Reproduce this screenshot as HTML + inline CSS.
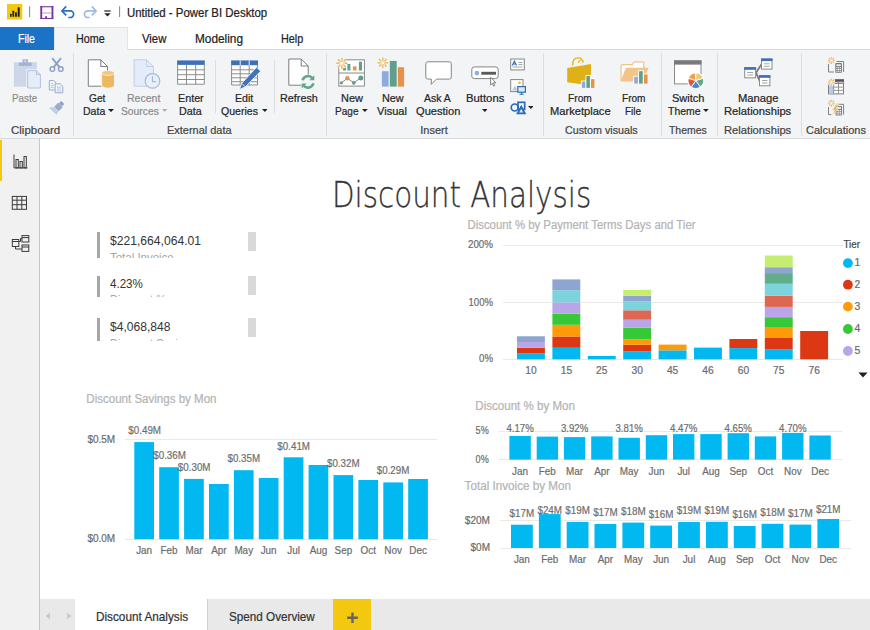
<!DOCTYPE html>
<html lang="en">
<head>
<meta charset="utf-8">
<title>Untitled - Power BI Desktop</title>
<style>
html,body{margin:0;padding:0;background:#fff}
body{width:870px;height:630px;overflow:hidden;position:relative;font-family:"Liberation Sans",sans-serif;font-size:12px;color:#333}
div,span,svg{position:absolute;box-sizing:border-box}
.t{white-space:nowrap;transform-origin:0 0;display:block}
#ribbon .t,#tabs .t,#titlebar .t,#pages .t{-webkit-text-stroke:.22px currentColor}
.title{-webkit-text-stroke:.3px #333;font-family:"DejaVu Sans Light","DejaVu Sans","Liberation Sans",sans-serif;font-weight:200}
svg text{font-family:"Liberation Sans",sans-serif}
#titlebar{left:0;top:0;width:870px;height:27px;background:#fff}
#tabs{left:0;top:27px;width:870px;height:23px;background:#fff}
#ribbon{left:0;top:50px;width:870px;height:89px;background:#f3f4f6;border-bottom:1px solid #d9dadb}
#nav{left:0;top:139px;width:40px;height:491px;background:#f1f1f1;border-right:1px solid #c9c6c6}
#canvas{left:40px;top:139px;width:830px;height:460px;background:#fff}
#pages{left:40px;top:599px;width:830px;height:31px;background:#e9e9e9}
.sep{width:1px;background:#dcdddf}
</style>
</head>
<body>

<div id="titlebar">
<svg width="125" height="27" viewBox="0 0 125 27" style="left:0;top:0">
<rect x="7" y="4" width="15.3" height="15.5" fill="#f2c811"/>
<rect x="10" y="13.8" width="1.6" height="3" rx=".5" fill="#222"/><rect x="12.4" y="10.8" width="1.8" height="6" rx=".5" fill="#222"/><rect x="15" y="12.3" width="1.9" height="4.5" rx=".5" fill="#222"/><rect x="17.7" y="7.3" width="2" height="9.5" rx=".5" fill="#222"/>
<rect x="29.200" y="6.200" width=".9" height="10.800" fill="#777"/>
<g fill="#7535a3"><rect x="40.300" y="6.200" width="1.900" height="12.800"/><rect x="51.500" y="6.200" width="1.900" height="12.800"/><rect x="40.300" y="6.200" width="13.100" height="1.100"/><rect x="40.300" y="18" width="13.100" height="1"/><rect x="45.200" y="16.200" width="1.800" height="2"/><rect x="42.200" y="12.500" width="9.300" height="1" fill="#b898d2"/></g>
<path d="M62.500 10.900h7.600a3.500 3.300 0 0 1 0 6.600h-1.800" fill="none" stroke="#2a6fc2" stroke-width="1.700"/><path d="M66.200 6.400l-4.300 4.500 4.300 4.500" fill="none" stroke="#2a6fc2" stroke-width="1.700"/>
<path d="M95.500 10.900h-7.600a3.500 3.300 0 0 0 0 6.600h1.800" fill="none" stroke="#a3bbdd" stroke-width="1.700"/><path d="M91.800 6.400l4.300 4.500-4.300 4.500" fill="none" stroke="#a3bbdd" stroke-width="1.700"/>
<rect x="104.3" y="10.4" width="6.4" height="1.2" fill="#222"/><path d="M104.3 13.2h6.4l-3.2 3.4z" fill="#222"/>
<rect x="119.200" y="6.200" width=".9" height="10.800" fill="#777"/>
</svg>
<span class="t" style="left:126.90px;top:5.5px;font-size:12px;line-height:15px;color:#222;transform:scaleX(0.9512)">Untitled - Power BI Desktop</span>
</div>
<div id="tabs">
<div style="left:0;top:22px;width:870px;height:1px;background:#dadbdc"></div>
<div style="left:0;top:0;width:53.5px;height:23px;background:#1a73c7"></div>
<div style="left:53.5px;top:0;width:74.5px;height:23px;background:#f3f4f6;border:1px solid #e3e4e6;border-bottom:none"></div>
<span class="t" style="left:18.00px;top:4.5px;font-size:12px;line-height:15px;color:#fff;transform:scaleX(0.8786)">File</span>
<span class="t" style="left:76.30px;top:4.5px;font-size:12px;line-height:15px;color:#222;transform:scaleX(0.8966)">Home</span>
<span class="t" style="left:142.30px;top:4.5px;font-size:12px;line-height:15px;color:#222;transform:scaleX(0.9446)">View</span>
<span class="t" style="left:195.40px;top:4.5px;font-size:12px;line-height:15px;color:#222;transform:scaleX(0.9858)">Modeling</span>
<span class="t" style="left:280.90px;top:4.5px;font-size:12px;line-height:15px;color:#222;transform:scaleX(0.9032)">Help</span>
</div>
<div id="ribbon">
<div class="sep" style="left:73.0px;top:3px;height:83px"></div>
<div class="sep" style="left:325.8px;top:3px;height:83px"></div>
<div class="sep" style="left:542.8px;top:3px;height:83px"></div>
<div class="sep" style="left:660.8px;top:3px;height:83px"></div>
<div class="sep" style="left:716.9px;top:3px;height:83px"></div>
<div class="sep" style="left:801.1px;top:3px;height:83px"></div>
<div class="sep" style="left:214.8px;top:10px;height:53px"></div>
<div class="sep" style="left:273.8px;top:10px;height:53px"></div>
<span class="t" style="left:12.40px;top:41.0px;font-size:11px;line-height:14px;color:#8c8c8c;transform:scaleX(0.8958)">Paste</span>
<span class="t" style="left:11.10px;top:73.0px;font-size:11px;line-height:14px;color:#444;transform:scaleX(1.0450)">Clipboard</span>
<span class="t" style="left:89.20px;top:41.0px;font-size:11px;line-height:14px;color:#262626;transform:scaleX(0.9246)">Get</span>
<span class="t" style="left:82.50px;top:54.0px;font-size:11px;line-height:14px;color:#262626;transform:scaleX(0.9597)">Data</span>
<svg width="8" height="5" viewBox="0 0 8 5" style="left:107.5px;top:59.1px;width:6.0px;height:3.1px" preserveAspectRatio="none"><path d="M0 0h8L4 5z" fill="#222"/></svg>
<span class="t" style="left:127.10px;top:41.0px;font-size:11px;line-height:14px;color:#8c8c8c;transform:scaleX(0.9586)">Recent</span>
<span class="t" style="left:121.40px;top:54.0px;font-size:11px;line-height:14px;color:#8c8c8c;transform:scaleX(0.9370)">Sources</span>
<svg width="8" height="5" viewBox="0 0 8 5" style="left:162.2px;top:59.2px;width:5.4px;height:2.8px" preserveAspectRatio="none"><path d="M0 0h8L4 5z" fill="#aaa"/></svg>
<span class="t" style="left:178.00px;top:41.0px;font-size:11px;line-height:14px;color:#262626;transform:scaleX(0.9776)">Enter</span>
<span class="t" style="left:178.70px;top:54.0px;font-size:11px;line-height:14px;color:#262626;transform:scaleX(0.9726)">Data</span>
<span class="t" style="left:166.80px;top:73.0px;font-size:11px;line-height:14px;color:#444;transform:scaleX(0.9962)">External data</span>
<span class="t" style="left:234.60px;top:41.0px;font-size:11px;line-height:14px;color:#262626;transform:scaleX(0.9658)">Edit</span>
<span class="t" style="left:221.10px;top:54.0px;font-size:11px;line-height:14px;color:#262626;transform:scaleX(0.9604)">Queries</span>
<svg width="8" height="5" viewBox="0 0 8 5" style="left:261.5px;top:59.1px;width:5.8px;height:3.0px" preserveAspectRatio="none"><path d="M0 0h8L4 5z" fill="#222"/></svg>
<span class="t" style="left:279.80px;top:41.0px;font-size:11px;line-height:14px;color:#262626;transform:scaleX(0.9811)">Refresh</span>
<span class="t" style="left:340.60px;top:41.0px;font-size:11px;line-height:14px;color:#262626;transform:scaleX(0.9942)">New</span>
<span class="t" style="left:335.40px;top:54.0px;font-size:11px;line-height:14px;color:#262626;transform:scaleX(0.9149)">Page</span>
<svg width="8" height="5" viewBox="0 0 8 5" style="left:362.0px;top:59.1px;width:5.8px;height:3.0px" preserveAspectRatio="none"><path d="M0 0h8L4 5z" fill="#222"/></svg>
<span class="t" style="left:381.60px;top:41.0px;font-size:11px;line-height:14px;color:#262626;transform:scaleX(0.9851)">New</span>
<span class="t" style="left:377.10px;top:54.0px;font-size:11px;line-height:14px;color:#262626;transform:scaleX(1.0049)">Visual</span>
<span class="t" style="left:424.00px;top:41.0px;font-size:11px;line-height:14px;color:#262626;transform:scaleX(0.9491)">Ask A</span>
<span class="t" style="left:415.80px;top:54.0px;font-size:11px;line-height:14px;color:#262626;transform:scaleX(1.0085)">Question</span>
<span class="t" style="left:466.10px;top:41.0px;font-size:11px;line-height:14px;color:#262626;transform:scaleX(1.0271)">Buttons</span>
<svg width="8" height="5" viewBox="0 0 8 5" style="left:481.5px;top:59.1px;width:5.7px;height:2.9px" preserveAspectRatio="none"><path d="M0 0h8L4 5z" fill="#222"/></svg>
<svg width="8" height="5" viewBox="0 0 8 5" style="left:527.7px;top:56.1px;width:5.8px;height:3.0px" preserveAspectRatio="none"><path d="M0 0h8L4 5z" fill="#222"/></svg>
<span class="t" style="left:420.30px;top:73.0px;font-size:11px;line-height:14px;color:#444;transform:scaleX(1.0000)">Insert</span>
<span class="t" style="left:567.90px;top:41.0px;font-size:11px;line-height:14px;color:#262626;transform:scaleX(0.9276)">From</span>
<span class="t" style="left:549.80px;top:54.0px;font-size:11px;line-height:14px;color:#262626;transform:scaleX(1.0113)">Marketplace</span>
<span class="t" style="left:621.50px;top:41.0px;font-size:11px;line-height:14px;color:#262626;transform:scaleX(0.9159)">From</span>
<span class="t" style="left:625.00px;top:54.0px;font-size:11px;line-height:14px;color:#262626;transform:scaleX(0.9020)">File</span>
<span class="t" style="left:564.70px;top:73.0px;font-size:11px;line-height:14px;color:#444;transform:scaleX(0.9748)">Custom visuals</span>
<span class="t" style="left:671.70px;top:41.0px;font-size:11px;line-height:14px;color:#262626;transform:scaleX(1.0032)">Switch</span>
<span class="t" style="left:667.70px;top:54.0px;font-size:11px;line-height:14px;color:#262626;transform:scaleX(0.9493)">Theme</span>
<svg width="8" height="5" viewBox="0 0 8 5" style="left:702.9px;top:59.1px;width:5.8px;height:3.0px" preserveAspectRatio="none"><path d="M0 0h8L4 5z" fill="#222"/></svg>
<span class="t" style="left:669.30px;top:73.0px;font-size:11px;line-height:14px;color:#444;transform:scaleX(0.9487)">Themes</span>
<span class="t" style="left:737.50px;top:41.0px;font-size:11px;line-height:14px;color:#262626;transform:scaleX(1.0185)">Manage</span>
<span class="t" style="left:724.40px;top:54.0px;font-size:11px;line-height:14px;color:#262626;transform:scaleX(1.0178)">Relationships</span>
<span class="t" style="left:724.40px;top:73.0px;font-size:11px;line-height:14px;color:#444;transform:scaleX(1.0178)">Relationships</span>
<span class="t" style="left:806.30px;top:73.0px;font-size:11px;line-height:14px;color:#444;transform:scaleX(0.9996)">Calculations</span>
<svg width="870" height="89" viewBox="0 50 870 89" style="left:0;top:0">
<g id="ico-paste">
<rect x="13.9" y="62.2" width="23" height="24.5" fill="#cdd7e9"/>
<rect x="18.8" y="62.6" width="12.9" height="3.3" fill="#a3b3d0"/>
<path d="M22.6 62.8v-3.5h5.4v3.5z" fill="#a3b3d0"/><rect x="24.4" y="60.5" width="1.8" height="1.5" fill="#dfe6f2"/>
<path d="M26.3 69.2h10.3l5.2 5.2v15H26.3z" fill="#f3f4f6"/>
<path d="M27.7 70.6h8.7l4 4v13.4H27.7z" fill="#e6edf8" stroke="#b3c2df" stroke-width="1"/>
<path d="M36.4 70.6v4h4" fill="none" stroke="#b3c2df" stroke-width="1"/>
</g>
<g id="ico-cut" fill="none" stroke="#8fa1c8" stroke-width="1.500">
<circle cx="52.400" cy="69.100" r="2.300"/><circle cx="60.800" cy="69.100" r="2.300"/>
<path d="M52.200 58.200l7.400 9.200M61 58.200l-7.400 9.200" stroke-width="2"/>
</g>
<g id="ico-copy" fill="#eef2fa" stroke="#9dadcf" stroke-width="1">
<path d="M49.300 80.500h4.400l2.200 2.200v7.300h-6.600z"/>
<path d="M55.100 83.800h5.100l2.600 2.600v6.400h-7.700z"/>
<path d="M51 83.500h2M51 85.500h2.800M51 87.500h2.800M57 87.200h4M57 89.100h4M57 91h4" stroke-width=".7" stroke="#aab8d6"/>
</g>
<g id="ico-brush">
<path d="M61.2 101l3 3-2.2 2.2-3-3z" fill="#8c9ec6"/>
<path d="M58.2 102.8l4.4 4.4-4 4-4.4-4.4z" fill="#9aabcd"/>
<path d="M54 107l4.600 4.600-2.200 3.200-7.500-7z" fill="#c3cee4"/>
</g>
<g id="ico-getdata">
<path d="M88.3 59.8h12.500l6.700 6.700v19.700H88.3z" fill="#fff" stroke="#7d7d7d" stroke-width="1"/>
<path d="M100.8 59.8v6.700h6.700" fill="none" stroke="#7d7d7d" stroke-width="1"/>
<path d="M101.300 70.5h13.500v18h-13.500z" fill="#f3f4f6"/>
<path d="M102.100 73v12.600a5.950 2.100 0 0 0 11.900 0V73z" fill="#ecb95f"/>
<ellipse cx="108.050" cy="73" rx="5.950" ry="2.100" fill="#f2c779"/>
<path d="M102.100 73.300a5.950 2.100 0 0 0 11.900 0" fill="none" stroke="#fdf3e0" stroke-width=".9"/>
</g>
<g id="ico-recent">
<path d="M134.100 59.800h12.500l6.800 6.700v19.700h-19.300z" fill="#e4ecf9" stroke="#c0cde4" stroke-width="1"/>
<path d="M146.600 59.800v6.700h6.800" fill="none" stroke="#c0cde4" stroke-width="1"/>
<circle cx="152.500" cy="80.900" r="7.300" fill="#eaf0fb" stroke="#a9b9db" stroke-width="1.200"/>
<path d="M152.500 76v5.600h3.600" fill="none" stroke="#a9b9db" stroke-width="1.200"/>
</g>
<g id="ico-enter"><rect x="177.1" y="60.4" width="27.7" height="24.3" fill="#fff"/><rect x="177.1" y="60.4" width="27.7" height="4.5" fill="#3f70b7"/><path d="M177.1 69.8H204.8M177.1 74.7H204.8M177.1 79.5H204.8M186.5 64.9V84.7M195.7 64.9V84.7M177.6 64.9V84.2H204.3V64.9" fill="none" stroke="#8c8c8c" stroke-width="1"/></g>
<g id="ico-edit"><rect x="231.1" y="60.4" width="26.9" height="25.1" fill="#fff"/><rect x="231.1" y="60.4" width="26.9" height="4.8" fill="#3f70b7"/><path d="M231.1 69.8H258M231.1 73.8H258M231.1 77.8H258M231.1 81.7H258M240.2 65.2V85.5M249.2 65.2V85.5M231.6 65.2V85.0H257.5V65.2" fill="none" stroke="#8c8c8c" stroke-width="1"/><path d="M240.200 60.400v4.800M249.200 60.400v4.800" stroke="#f3f4f6" stroke-width="1"/>
<path d="M256.600 67.200l4 4-15.300 15.700-5.900 2.500 2.300-6.100z" fill="#4173bb" stroke="#f3f4f6" stroke-width=".9"/>
<path d="M241.800 83.400l3.500 3.500" stroke="#f3f4f6" stroke-width=".9"/>
</g>
<g id="ico-refresh">
<path d="M288.800 59h12.400l7 7v19.200h-19.400z" fill="#fff" stroke="#7d7d7d" stroke-width="1"/>
<path d="M301.200 59v7h7" fill="none" stroke="#7d7d7d" stroke-width="1"/>
<circle cx="308" cy="81.800" r="7.600" fill="#f3f4f6"/>
<path d="M302.600 80.300a5.600 5.600 0 0 1 9.800-2.200" fill="none" stroke="#5fa98b" stroke-width="2.600"/>
<path d="M313.400 83.300a5.600 5.600 0 0 1-9.800 2.200" fill="none" stroke="#5fa98b" stroke-width="2.600"/>
<path d="M314.300 75.200v5h-5z" fill="#5fa98b"/><path d="M301.700 88.400v-5h5z" fill="#5fa98b"/>
</g>
<g id="ico-newpage">
<rect x="338.800" y="59.800" width="25.600" height="26.300" fill="#fff" stroke="#8a8a8a" stroke-width="1"/>
<path d="M338.800 73h25.600" stroke="#8a8a8a" stroke-width="1"/>
<rect x="347.400" y="64" width="3" height="6.500" fill="#5fa08a"/><rect x="352.900" y="66.400" width="3.600" height="4.100" fill="#e8914a"/><rect x="358.900" y="61.700" width="3.100" height="8.800" fill="#5fa08a"/>
<rect x="343" y="68" width="3" height="2.500" fill="#5fa08a"/>
<path d="M341.400 82.800l5.900-4.500 6.500 4.500 7-4.900" fill="none" stroke="#8a8a8a" stroke-width="1"/>
<circle cx="341.400" cy="82.800" r="1.600" fill="#5fa08a"/><circle cx="347.300" cy="78.300" r="2.200" fill="#e8914a"/><circle cx="353.800" cy="82.800" r="1.900" fill="#5fa08a"/><circle cx="360.800" cy="77.900" r="2.500" fill="#5fa08a"/>
<circle cx="341.900" cy="63.300" r="5.400" fill="#f3f4f6"/><path d="M344.59 63.30L347.50 63.30M343.80 65.20L345.86 67.26M341.90 65.99L341.90 68.90M340.00 65.20L337.94 67.26M339.21 63.30L336.30 63.30M340.00 61.40L337.94 59.34M341.90 60.61L341.90 57.70M343.80 61.40L345.86 59.34" stroke="#f1b85c" stroke-width="1.5" fill="none"/><circle cx="341.9" cy="63.3" r="2.02" fill="#fff" stroke="#f1b85c" stroke-width="0.75"/>
</g>
<g id="ico-newvisual">
<rect x="381.900" y="71.200" width="6.700" height="15.400" fill="#8faadc"/><rect x="389.800" y="60.900" width="6.900" height="25.700" fill="#5fa08a"/><rect x="397.800" y="67.200" width="6.300" height="19.400" fill="#e8914a"/>
<path d="M385.34 62.80L388.10 62.80M384.60 64.60L386.55 66.55M382.80 65.34L382.80 68.10M381.00 64.60L379.05 66.55M380.26 62.80L377.50 62.80M381.00 61.00L379.05 59.05M382.80 60.26L382.80 57.50M384.60 61.00L386.55 59.05" stroke="#f1b85c" stroke-width="1.5" fill="none"/><circle cx="382.8" cy="62.8" r="1.91" fill="#fff" stroke="#f1b85c" stroke-width="0.75"/>
</g>
<g id="ico-ask">
<path d="M427.800 61.800h21.500a2 2 0 0 1 2 2v13.300a2 2 0 0 1-2 2h-12.800l-5.200 5.200v-5.200h-3.500a2 2 0 0 1-2-2V63.800a2 2 0 0 1 2-2z" fill="#fff" stroke="#858585" stroke-width="1"/>
</g>
<g id="ico-buttons">
<rect x="471.800" y="66.900" width="26.400" height="11.700" rx="2.500" fill="#fff" stroke="#858585" stroke-width="1"/>
<circle cx="476.900" cy="73.100" r="2.300" fill="#86b0e6"/><rect x="481.300" y="71.800" width="14.700" height="2.900" fill="#5a5a5a"/>
<path d="M490.600 77.300v7.600l1.700-1.600 1.300 2.800 1.100-.5-1.300-2.800h2.400z" fill="#fff" stroke="#666" stroke-width=".8"/>
</g>
<g id="ico-textbox">
<rect x="510.700" y="59" width="13.600" height="10.900" fill="#fff" stroke="#858585" stroke-width="1"/>
<path d="M518.500 62.500h4M518.500 64.500h4M512.500 67h10" stroke="#9a9a9a" stroke-width=".9"/>
<path d="M512.300 65.500l2.100-4.500 2.100 4.500M513.100 64h2.600" fill="none" stroke="#2b6cb8" stroke-width="1.100"/>
</g>
<g id="ico-image">
<rect x="510.700" y="79.600" width="12.300" height="12" fill="#fff" stroke="#858585" stroke-width="1"/>
<circle cx="519.500" cy="82.700" r="1.300" fill="#f0b14e"/>
<path d="M512 90.500l3-5 2.500 5z" fill="#b9c7e2"/>
<rect x="517.800" y="86.600" width="7.600" height="5.600" fill="#dfe9f8" stroke="#2b6cb8" stroke-width="1.200"/><path d="M521.600 92.500v1.500M519.500 94.200h4.200" stroke="#2b6cb8" stroke-width="1.100"/>
</g>
<g id="ico-shapes" fill="none" stroke="#2b6cb8" stroke-width="1.700">
<circle cx="514.700" cy="107.500" r="3.500"/><rect x="518" y="102.300" width="6.700" height="7"/><path d="M521.200 106.800l3.500 6.600h-7z" fill="#dfe8f5" stroke-width="1.900"/>
</g>
<g id="ico-market">
<path d="M572.600 65.500c0-4.500 2-7.600 5.200-7.600 3 0 5 2 5.600 4.800" fill="none" stroke="#e6b422" stroke-width="1.400"/>
<path d="M578.300 63c.3-1.700 1.200-2.700 2.500-2.700" fill="none" stroke="#e6b422" stroke-width="1.100"/>
<path d="M567.200 68l23.800-4v21.500l-23.800-3.200z" fill="#dfb116"/>
<rect x="580.90" y="80.60" width="5.30" height="7.30" fill="#fff"/><rect x="585.50" y="75.10" width="5.30" height="12.80" fill="#fff"/><rect x="590.10" y="78.20" width="5.30" height="9.70" fill="#fff"/><rect x="581.80" y="81.50" width="3.50" height="6.40" fill="#8faadc"/><rect x="586.40" y="76.00" width="3.50" height="11.90" fill="#5fa08a"/><rect x="591.00" y="79.10" width="3.50" height="8.80" fill="#e8914a"/>
</g>
<g id="ico-fromfile">
<path d="M621 80.800V66a1.400 1.400 0 0 1 1.400-1.400h9.600l2.400-2.800h8a1.400 1.400 0 0 1 1.400 1.400v5.600" fill="#fff" stroke="#efc48a" stroke-width="1.200"/>
<path d="M620.400 81.500l5.600-13.800h22.600l-5.600 13.800z" fill="#f2c48a"/>
<rect x="633.30" y="75.80" width="5.50" height="7.80" fill="#fff"/><rect x="638.15" y="70.30" width="5.50" height="13.30" fill="#fff"/><rect x="643.00" y="73.50" width="5.50" height="10.10" fill="#fff"/><rect x="634.20" y="76.70" width="3.70" height="6.90" fill="#8faadc"/><rect x="639.05" y="71.20" width="3.70" height="12.40" fill="#5fa08a"/><rect x="643.90" y="74.40" width="3.70" height="9.20" fill="#e8914a"/>
</g>
<g id="ico-theme">
<rect x="674.500" y="60.900" width="26.500" height="23" fill="#fff" stroke="#8a8a8a" stroke-width="1"/>
<rect x="674" y="60.400" width="27.500" height="4.200" fill="#7a7a7a"/>
<circle cx="695.800" cy="80.700" r="8.600" fill="#fff"/>
<path d="M695.8 80.7L688.48 78.32A7.7 7.7 0 0 1 695.80 73.00z" fill="#f0a04b" stroke="#fff" stroke-width=".9"/>
<path d="M695.8 80.7L695.80 73.00A7.7 7.7 0 0 1 703.12 78.32z" fill="#f0c87a" stroke="#fff" stroke-width=".9"/>
<path d="M695.8 80.7L703.12 78.32A7.7 7.7 0 0 1 700.33 86.93z" fill="#5fa88a" stroke="#fff" stroke-width=".9"/>
<path d="M695.8 80.7L700.33 86.93A7.7 7.7 0 0 1 691.27 86.93z" fill="#4a86d0" stroke="#fff" stroke-width=".9"/>
<path d="M695.8 80.7L691.27 86.93A7.7 7.7 0 0 1 688.48 78.32z" fill="#e05a3a" stroke="#fff" stroke-width=".9"/>
</g>
<g id="ico-manage">
<path d="M756 72.700l5.500-8.500M756 72.700l3.500 8" fill="none" stroke="#7c7c7c" stroke-width="1.800"/>
<rect x="744.7" y="67.7" width="10.9" height="10.1" fill="#fff" stroke="#8a8a8a" stroke-width="1"/><rect x="744.2" y="67.2" width="11.9" height="2.600" fill="#3f70b7"/><path d="M747.2 72.5h5.9M747.2 75.0h5.9" stroke="#9a9a9a" stroke-width=".9"/><rect x="761.5" y="59.0" width="10.5" height="10.1" fill="#fff" stroke="#8a8a8a" stroke-width="1"/><rect x="761.0" y="58.5" width="11.5" height="2.600" fill="#3f70b7"/><path d="M764.0 63.8h5.5M764.0 66.3h5.5" stroke="#9a9a9a" stroke-width=".9"/><rect x="759.5" y="75.7" width="10.4" height="10.1" fill="#fff" stroke="#8a8a8a" stroke-width="1"/><rect x="759.0" y="75.2" width="11.4" height="2.600" fill="#3f70b7"/><path d="M762.0 80.5h5.4M762.0 83.0h5.4" stroke="#9a9a9a" stroke-width=".9"/>
</g>
<g id="ico-calc1">
<path d="M828.500 63.900v8.100h5.400M836.500 61.500h7.100v10.500" fill="none" stroke="#7f7f7f" stroke-width="1"/>
<rect x="835.3" y="63.1" width="6.6" height="9.6" rx=".8" fill="#777"/><rect x="836.4" y="64.2" width="4.4" height="2" fill="#e6e6e6"/><rect x="836.30" y="67.20" width="1.200" height="1.100" fill="#fff"/><rect x="838.00" y="67.20" width="1.200" height="1.100" fill="#fff"/><rect x="839.70" y="67.20" width="1.200" height="1.100" fill="#fff"/><rect x="836.30" y="68.95" width="1.200" height="1.100" fill="#fff"/><rect x="838.00" y="68.95" width="1.200" height="1.100" fill="#fff"/><rect x="839.70" y="68.95" width="1.200" height="1.100" fill="#fff"/><rect x="836.30" y="70.70" width="1.200" height="1.100" fill="#fff"/><rect x="838.00" y="70.70" width="1.200" height="1.100" fill="#fff"/><rect x="839.70" y="70.70" width="1.200" height="1.100" fill="#fff"/>
<path d="M833.08 60.40L834.90 60.40M832.59 61.59L833.87 62.87M831.40 62.08L831.40 63.90M830.21 61.59L828.93 62.87M829.72 60.40L827.90 60.40M830.21 59.21L828.93 57.93M831.40 58.72L831.40 56.90M832.59 59.21L833.87 57.93" stroke="#f1b85c" stroke-width="1.1" fill="none"/><circle cx="831.4" cy="60.4" r="1.26" fill="#fff" stroke="#f1b85c" stroke-width="0.55"/>
</g>
<g id="ico-calc2">
<rect x="828.500" y="83.600" width="15" height="10.300" fill="#fff" stroke="#7f7f7f" stroke-width="1"/>
<rect x="834.800" y="79.200" width="9.200" height="2.700" fill="#555"/>
<rect x="829" y="85.500" width="4.200" height="8" fill="#b5cdee"/>
<path d="M833.600 83.600v10.300M838.500 82v11.900M833.600 87.100h9.900M833.600 90.400h9.900M833.600 83.600v-1.600h10.100v1.600" fill="none" stroke="#8a8a8a" stroke-width=".9"/>
<circle cx="831.400" cy="82.200" r="3.600" fill="#f3f4f6"/>
<path d="M833.08 82.20L834.90 82.20M832.59 83.39L833.87 84.67M831.40 83.88L831.40 85.70M830.21 83.39L828.93 84.67M829.72 82.20L827.90 82.20M830.21 81.01L828.93 79.73M831.40 80.52L831.40 78.70M832.59 81.01L833.87 79.73" stroke="#f1b85c" stroke-width="1.1" fill="none"/><circle cx="831.4" cy="82.2" r="1.26" fill="#fff" stroke="#f1b85c" stroke-width="0.55"/>
</g>
<g id="ico-calc3">
<path d="M828.500 107v7.600h2.900M836.500 104.300h7.100v10.300" fill="none" stroke="#7f7f7f" stroke-width="1"/>
<rect x="835.5" y="105.9" width="6.6" height="9.6" rx=".8" fill="#808080"/><rect x="836.6" y="107.0" width="4.4" height="2" fill="#e6e6e6"/><rect x="836.50" y="110.00" width="1.200" height="1.100" fill="#fff"/><rect x="838.20" y="110.00" width="1.200" height="1.100" fill="#fff"/><rect x="839.90" y="110.00" width="1.200" height="1.100" fill="#fff"/><rect x="836.50" y="111.75" width="1.200" height="1.100" fill="#fff"/><rect x="838.20" y="111.75" width="1.200" height="1.100" fill="#fff"/><rect x="839.90" y="111.75" width="1.200" height="1.100" fill="#fff"/><rect x="836.50" y="113.50" width="1.200" height="1.100" fill="#fff"/><rect x="838.20" y="113.50" width="1.200" height="1.100" fill="#fff"/><rect x="839.90" y="113.50" width="1.200" height="1.100" fill="#fff"/>
<path d="M836 104.400h2.800l-2.700 4.100h2.500l-7 7.200 2.900-5.400h-2.300z" fill="#f0b14e" stroke="#f3f4f6" stroke-width=".6"/>
<path d="M833.08 103.20L834.90 103.20M832.59 104.39L833.87 105.67M831.40 104.88L831.40 106.70M830.21 104.39L828.93 105.67M829.72 103.20L827.90 103.20M830.21 102.01L828.93 100.73M831.40 101.52L831.40 99.70M832.59 102.01L833.87 100.73" stroke="#f1b85c" stroke-width="1.1" fill="none"/><circle cx="831.4" cy="103.2" r="1.26" fill="#fff" stroke="#f1b85c" stroke-width="0.55"/>
</g>
</svg>
</div>
<div id="nav">
<div style="left:0;top:0.5px;width:2px;height:41px;background:#f2c811"></div>
<svg width="40" height="130" viewBox="0 139 40 130" style="left:0;top:0">
<g id="nav-report" fill="none" stroke="#3b3b3b" stroke-width="1">
<path d="M14 154.600v13.300h13.500"/>
<rect x="16" y="159.500" width="2.300" height="8.400"/><rect x="20" y="161.500" width="2.300" height="6.400"/><rect x="24" y="156.500" width="2.300" height="11.400"/>
</g>
<g id="nav-data" fill="none" stroke="#3b3b3b" stroke-width="1">
<rect x="12.300" y="196.400" width="14.200" height="12.900"/><path d="M12.300 200.200h14.200M12.300 204.700h14.200M17 196.400v12.900M21.800 196.400v12.900"/>
</g>
<g id="nav-model" fill="none" stroke="#3b3b3b" stroke-width="1">
<rect x="12.300" y="239.500" width="6.500" height="7"/><path d="M12.300 241.500h6.500"/>
<rect x="22" y="235.600" width="6.800" height="6.400"/><path d="M22 237.600h6.800"/>
<rect x="22" y="245" width="6.800" height="6.400"/><path d="M22 247h6.800"/>
<path d="M18.800 241.500h1.700v-3h1.500M15.500 246.500v2.500h6.500"/>
</g>
</svg>
</div>
<div id="canvas">
<span class="t title" style="left:292.30px;top:34.0px;font-size:35px;line-height:44px;color:#333;transform:scaleX(0.8389)">Discount Analysis</span>
<div style="left:57.4px;top:93.0px;width:2.6px;height:25.6px;background:#a6a6a6"></div><div style="left:207.5px;top:93.0px;width:8px;height:18.7px;background:#d9d9d9"></div><div style="left:65px;top:93.0px;width:130px;height:25.6px;overflow:hidden"><span class="t" style="left:5.10px;top:1.5px;font-size:12px;line-height:15px;color:#333;transform:scaleX(1.0112)">$221,664,064.01</span><span class="t" style="left:5.30px;top:18.5px;font-size:12px;line-height:15px;color:#a6a6a6;transform:scaleX(0.9547)">Total Invoice</span></div>
<div style="left:57.4px;top:136.7px;width:2.6px;height:21.7px;background:#a6a6a6"></div><div style="left:207.5px;top:136.7px;width:8px;height:18.9px;background:#d9d9d9"></div><div style="left:65px;top:136.7px;width:130px;height:21.7px;overflow:hidden"><span class="t" style="left:5.10px;top:1.8px;font-size:12px;line-height:15px;color:#333;transform:scaleX(0.9641)">4.23%</span><span class="t" style="left:5.30px;top:17.8px;font-size:12px;line-height:15px;color:#a6a6a6;transform:scaleX(0.9244)">Discount %</span></div>
<div style="left:57.4px;top:178.5px;width:2.6px;height:23.2px;background:#a6a6a6"></div><div style="left:207.5px;top:178.5px;width:8px;height:19.1px;background:#d9d9d9"></div><div style="left:65px;top:178.5px;width:130px;height:23.2px;overflow:hidden"><span class="t" style="left:5.10px;top:2.0px;font-size:12px;line-height:15px;color:#333;transform:scaleX(1.0057)">$4,068,848</span><span class="t" style="left:5.30px;top:19.0px;font-size:12px;line-height:15px;color:#a6a6a6;transform:scaleX(0.9242)">Discount Savings</span></div>
<svg width="830" height="460" viewBox="40 139 830 460" style="left:0;top:0" shape-rendering="crispEdges">
<g id="chart-terms">
<text x="467.50" y="228.60" font-size="12" fill="#b3b3b3" stroke="#b3b3b3" stroke-width="0.2" textLength="228.01" lengthAdjust="spacingAndGlyphs">Discount % by Payment Terms Days and Tier</text>
<rect x="503" y="244.6" width="340" height="1" fill="#e9e9e9"/>
<rect x="503" y="301.9" width="340" height="1" fill="#e9e9e9"/>
<rect x="503" y="358.8" width="340" height="1" fill="#e9e9e9"/>
<text x="468.00" y="248.40" font-size="11" fill="#6a6a6a" stroke="#6a6a6a" stroke-width="0.2" textLength="25.00" lengthAdjust="spacingAndGlyphs">200%</text>
<text x="468.50" y="305.70" font-size="11" fill="#6a6a6a" stroke="#6a6a6a" stroke-width="0.2" textLength="24.50" lengthAdjust="spacingAndGlyphs">100%</text>
<text x="479.10" y="362.40" font-size="11" fill="#6a6a6a" stroke="#6a6a6a" stroke-width="0.2" textLength="13.90" lengthAdjust="spacingAndGlyphs">0%</text>
<g shape-rendering="auto">
<rect x="517.0" y="353.3" width="27.9" height="6.0" fill="#01b8f1"/>
<rect x="517.0" y="347.8" width="27.9" height="5.5" fill="#dd3814"/>
<rect x="517.0" y="342.0" width="27.9" height="5.8" fill="#b9a5e8"/>
<rect x="517.0" y="336.3" width="27.9" height="5.7" fill="#8ea5d0"/>
<rect x="552.4" y="347.8" width="27.9" height="11.5" fill="#01b8f1"/>
<rect x="552.4" y="336.5" width="27.9" height="11.3" fill="#dd3814"/>
<rect x="552.4" y="324.8" width="27.9" height="11.7" fill="#ff9a08"/>
<rect x="552.4" y="313.7" width="27.9" height="11.1" fill="#37c837"/>
<rect x="552.4" y="302.4" width="27.9" height="11.3" fill="#b9a5e8"/>
<rect x="552.4" y="290.2" width="27.9" height="12.2" fill="#7dd3db"/>
<rect x="552.4" y="279.4" width="27.9" height="10.8" fill="#8ea5d0"/>
<rect x="587.8" y="356.0" width="27.9" height="3.3" fill="#01b8f1"/>
<rect x="623.2" y="351.2" width="27.9" height="8.1" fill="#01b8f1"/>
<rect x="623.2" y="344.8" width="27.9" height="6.4" fill="#dd3814"/>
<rect x="623.2" y="339.3" width="27.9" height="5.5" fill="#ff9a08"/>
<rect x="623.2" y="327.8" width="27.9" height="11.5" fill="#37c837"/>
<rect x="623.2" y="319.7" width="27.9" height="8.1" fill="#b9a5e8"/>
<rect x="623.2" y="310.3" width="27.9" height="9.4" fill="#dc6752"/>
<rect x="623.2" y="301.3" width="27.9" height="9.0" fill="#7dd3db"/>
<rect x="623.2" y="295.8" width="27.9" height="5.5" fill="#8ea5d0"/>
<rect x="623.2" y="289.8" width="27.9" height="6.0" fill="#c5ed72"/>
<rect x="658.6" y="350.3" width="27.9" height="9.0" fill="#01b8f1"/>
<rect x="658.6" y="344.6" width="27.9" height="5.7" fill="#ff9a08"/>
<rect x="694.0" y="347.6" width="27.9" height="11.7" fill="#01b8f1"/>
<rect x="729.4" y="348.1" width="27.9" height="11.2" fill="#01b8f1"/>
<rect x="729.4" y="339.0" width="27.9" height="9.1" fill="#dd3814"/>
<rect x="764.8" y="349.2" width="27.9" height="10.1" fill="#01b8f1"/>
<rect x="764.8" y="338.0" width="27.9" height="11.2" fill="#dd3814"/>
<rect x="764.8" y="327.0" width="27.9" height="11.0" fill="#ff9a08"/>
<rect x="764.8" y="317.2" width="27.9" height="9.8" fill="#37c837"/>
<rect x="764.8" y="306.9" width="27.9" height="10.3" fill="#b9a5e8"/>
<rect x="764.8" y="295.7" width="27.9" height="11.2" fill="#dc6752"/>
<rect x="764.8" y="283.8" width="27.9" height="11.9" fill="#7dd3db"/>
<rect x="764.8" y="273.1" width="27.9" height="10.7" fill="#60ae8c"/>
<rect x="764.8" y="267.2" width="27.9" height="5.9" fill="#8ea5d0"/>
<rect x="764.8" y="255.5" width="27.9" height="11.7" fill="#c5ed72"/>
<rect x="800.2" y="331.0" width="27.9" height="28.3" fill="#dd3814"/>
</g>
<text x="525.31" y="373.60" font-size="11" fill="#6a6a6a" stroke="#6a6a6a" stroke-width="0.2" textLength="11.38" lengthAdjust="spacingAndGlyphs">10</text>
<text x="560.71" y="373.60" font-size="11" fill="#6a6a6a" stroke="#6a6a6a" stroke-width="0.2" textLength="11.38" lengthAdjust="spacingAndGlyphs">15</text>
<text x="596.11" y="373.60" font-size="11" fill="#6a6a6a" stroke="#6a6a6a" stroke-width="0.2" textLength="11.38" lengthAdjust="spacingAndGlyphs">25</text>
<text x="631.51" y="373.60" font-size="11" fill="#6a6a6a" stroke="#6a6a6a" stroke-width="0.2" textLength="11.38" lengthAdjust="spacingAndGlyphs">30</text>
<text x="666.91" y="373.60" font-size="11" fill="#6a6a6a" stroke="#6a6a6a" stroke-width="0.2" textLength="11.38" lengthAdjust="spacingAndGlyphs">45</text>
<text x="702.31" y="373.60" font-size="11" fill="#6a6a6a" stroke="#6a6a6a" stroke-width="0.2" textLength="11.38" lengthAdjust="spacingAndGlyphs">46</text>
<text x="737.71" y="373.60" font-size="11" fill="#6a6a6a" stroke="#6a6a6a" stroke-width="0.2" textLength="11.38" lengthAdjust="spacingAndGlyphs">60</text>
<text x="773.11" y="373.60" font-size="11" fill="#6a6a6a" stroke="#6a6a6a" stroke-width="0.2" textLength="11.38" lengthAdjust="spacingAndGlyphs">75</text>
<text x="808.51" y="373.60" font-size="11" fill="#6a6a6a" stroke="#6a6a6a" stroke-width="0.2" textLength="11.38" lengthAdjust="spacingAndGlyphs">76</text>
<text x="843.50" y="247.80" font-size="11" fill="#444" stroke="#444" stroke-width="0.2" textLength="16.50" lengthAdjust="spacingAndGlyphs">Tier</text>
<circle cx="847.9" cy="263.1" r="4.9" fill="#01b8f1" shape-rendering="auto"/>
<text x="854.40" y="266.40" font-size="11" fill="#6a6a6a" stroke="#6a6a6a" stroke-width="0.2" textLength="5.81" lengthAdjust="spacingAndGlyphs">1</text>
<circle cx="847.9" cy="284.7" r="4.9" fill="#dd3814" shape-rendering="auto"/>
<text x="854.40" y="288.00" font-size="11" fill="#6a6a6a" stroke="#6a6a6a" stroke-width="0.2" textLength="5.81" lengthAdjust="spacingAndGlyphs">2</text>
<circle cx="847.9" cy="306.6" r="4.9" fill="#ff9a08" shape-rendering="auto"/>
<text x="854.40" y="309.90" font-size="11" fill="#6a6a6a" stroke="#6a6a6a" stroke-width="0.2" textLength="5.81" lengthAdjust="spacingAndGlyphs">3</text>
<circle cx="847.9" cy="329" r="4.9" fill="#37c837" shape-rendering="auto"/>
<text x="854.40" y="332.30" font-size="11" fill="#6a6a6a" stroke="#6a6a6a" stroke-width="0.2" textLength="5.81" lengthAdjust="spacingAndGlyphs">4</text>
<circle cx="847.9" cy="351" r="4.9" fill="#b9a5e8" shape-rendering="auto"/>
<text x="854.40" y="354.30" font-size="11" fill="#6a6a6a" stroke="#6a6a6a" stroke-width="0.2" textLength="5.81" lengthAdjust="spacingAndGlyphs">5</text>
<path d="M858.4 372.6h9.2l-4.6 5z" fill="#222" shape-rendering="auto"/>
</g>
<g id="chart-savings">
<text x="86.30" y="402.90" font-size="12" fill="#b3b3b3" stroke="#b3b3b3" stroke-width="0.2" textLength="130.21" lengthAdjust="spacingAndGlyphs">Discount Savings by Mon</text>
<rect x="125" y="439.1" width="312" height="1" fill="#e9e9e9"/>
<rect x="125" y="538.9" width="312" height="1" fill="#e9e9e9"/>
<text x="87.40" y="443.00" font-size="11" fill="#6a6a6a" stroke="#6a6a6a" stroke-width="0.2" textLength="27.79" lengthAdjust="spacingAndGlyphs">$0.5M</text>
<text x="87.40" y="542.40" font-size="11" fill="#6a6a6a" stroke="#6a6a6a" stroke-width="0.2" textLength="27.79" lengthAdjust="spacingAndGlyphs">$0.0M</text>
<g shape-rendering="auto">
<rect x="134.3" y="442.1" width="19.7" height="97.1" fill="#01b8f1"/>
<rect x="159.2" y="467.2" width="19.7" height="72.0" fill="#01b8f1"/>
<rect x="184.1" y="478.9" width="19.7" height="60.3" fill="#01b8f1"/>
<rect x="209.0" y="484.0" width="19.7" height="55.2" fill="#01b8f1"/>
<rect x="233.9" y="470.2" width="19.7" height="69.0" fill="#01b8f1"/>
<rect x="258.8" y="478.0" width="19.7" height="61.2" fill="#01b8f1"/>
<rect x="283.7" y="457.3" width="19.7" height="81.9" fill="#01b8f1"/>
<rect x="308.6" y="465.0" width="19.7" height="74.2" fill="#01b8f1"/>
<rect x="333.5" y="475.1" width="19.7" height="64.1" fill="#01b8f1"/>
<rect x="358.4" y="480.0" width="19.7" height="59.2" fill="#01b8f1"/>
<rect x="383.3" y="482.4" width="19.7" height="56.8" fill="#01b8f1"/>
<rect x="408.2" y="479.0" width="19.7" height="60.2" fill="#01b8f1"/>
</g>
<text x="136.17" y="553.70" font-size="11" fill="#6a6a6a" stroke="#6a6a6a" stroke-width="0.2" textLength="15.96" lengthAdjust="spacingAndGlyphs">Jan</text>
<text x="160.52" y="553.70" font-size="11" fill="#6a6a6a" stroke="#6a6a6a" stroke-width="0.2" textLength="17.06" lengthAdjust="spacingAndGlyphs">Feb</text>
<text x="185.42" y="553.70" font-size="11" fill="#6a6a6a" stroke="#6a6a6a" stroke-width="0.2" textLength="17.05" lengthAdjust="spacingAndGlyphs">Mar</text>
<text x="211.15" y="553.70" font-size="11" fill="#6a6a6a" stroke="#6a6a6a" stroke-width="0.2" textLength="15.41" lengthAdjust="spacingAndGlyphs">Apr</text>
<text x="234.39" y="553.70" font-size="11" fill="#6a6a6a" stroke="#6a6a6a" stroke-width="0.2" textLength="18.70" lengthAdjust="spacingAndGlyphs">May</text>
<text x="260.67" y="553.70" font-size="11" fill="#6a6a6a" stroke="#6a6a6a" stroke-width="0.2" textLength="15.96" lengthAdjust="spacingAndGlyphs">Jun</text>
<text x="287.23" y="553.70" font-size="11" fill="#6a6a6a" stroke="#6a6a6a" stroke-width="0.2" textLength="12.66" lengthAdjust="spacingAndGlyphs">Jul</text>
<text x="309.64" y="553.70" font-size="11" fill="#6a6a6a" stroke="#6a6a6a" stroke-width="0.2" textLength="17.62" lengthAdjust="spacingAndGlyphs">Aug</text>
<text x="334.54" y="553.70" font-size="11" fill="#6a6a6a" stroke="#6a6a6a" stroke-width="0.2" textLength="17.62" lengthAdjust="spacingAndGlyphs">Sep</text>
<text x="360.55" y="553.70" font-size="11" fill="#6a6a6a" stroke="#6a6a6a" stroke-width="0.2" textLength="15.40" lengthAdjust="spacingAndGlyphs">Oct</text>
<text x="384.35" y="553.70" font-size="11" fill="#6a6a6a" stroke="#6a6a6a" stroke-width="0.2" textLength="17.61" lengthAdjust="spacingAndGlyphs">Nov</text>
<text x="409.25" y="553.70" font-size="11" fill="#6a6a6a" stroke="#6a6a6a" stroke-width="0.2" textLength="17.61" lengthAdjust="spacingAndGlyphs">Dec</text>
<text x="128.30" y="433.90" font-size="11" fill="#6e6e6e" stroke="#6e6e6e" stroke-width="0.2" textLength="32.71" lengthAdjust="spacingAndGlyphs">$0.49M</text>
<text x="153.20" y="459.40" font-size="11" fill="#6e6e6e" stroke="#6e6e6e" stroke-width="0.2" textLength="32.81" lengthAdjust="spacingAndGlyphs">$0.36M</text>
<text x="177.80" y="470.90" font-size="11" fill="#6e6e6e" stroke="#6e6e6e" stroke-width="0.2" textLength="32.71" lengthAdjust="spacingAndGlyphs">$0.30M</text>
<text x="227.50" y="462.40" font-size="11" fill="#6e6e6e" stroke="#6e6e6e" stroke-width="0.2" textLength="32.51" lengthAdjust="spacingAndGlyphs">$0.35M</text>
<text x="277.30" y="449.50" font-size="11" fill="#6e6e6e" stroke="#6e6e6e" stroke-width="0.2" textLength="32.71" lengthAdjust="spacingAndGlyphs">$0.41M</text>
<text x="327.00" y="467.30" font-size="11" fill="#6e6e6e" stroke="#6e6e6e" stroke-width="0.2" textLength="32.61" lengthAdjust="spacingAndGlyphs">$0.32M</text>
<text x="376.80" y="473.60" font-size="11" fill="#6e6e6e" stroke="#6e6e6e" stroke-width="0.2" textLength="32.51" lengthAdjust="spacingAndGlyphs">$0.29M</text>
</g>
<g id="chart-pct">
<text x="475.30" y="409.60" font-size="12" fill="#b3b3b3" stroke="#b3b3b3" stroke-width="0.2" textLength="99.70" lengthAdjust="spacingAndGlyphs">Discount % by Mon</text>
<rect x="499" y="430.8" width="342.5" height="1" fill="#e9e9e9"/>
<rect x="499" y="459.3" width="342.5" height="1" fill="#e9e9e9"/>
<text x="475.60" y="433.90" font-size="11" fill="#6a6a6a" stroke="#6a6a6a" stroke-width="0.2" textLength="13.10" lengthAdjust="spacingAndGlyphs">5%</text>
<text x="475.60" y="463.10" font-size="11" fill="#6a6a6a" stroke="#6a6a6a" stroke-width="0.2" textLength="13.10" lengthAdjust="spacingAndGlyphs">0%</text>
<g shape-rendering="auto">
<rect x="509.4" y="435.9" width="21.4" height="23.7" fill="#01b8f1"/>
<rect x="536.7" y="436.6" width="21.4" height="23.0" fill="#01b8f1"/>
<rect x="563.9" y="437.1" width="21.4" height="22.5" fill="#01b8f1"/>
<rect x="591.2" y="436.4" width="21.4" height="23.2" fill="#01b8f1"/>
<rect x="618.5" y="437.8" width="21.4" height="21.8" fill="#01b8f1"/>
<rect x="645.8" y="435.2" width="21.4" height="24.4" fill="#01b8f1"/>
<rect x="673.0" y="434.1" width="21.4" height="25.5" fill="#01b8f1"/>
<rect x="700.3" y="434.1" width="21.4" height="25.5" fill="#01b8f1"/>
<rect x="727.6" y="433.2" width="21.4" height="26.4" fill="#01b8f1"/>
<rect x="754.8" y="436.4" width="21.4" height="23.2" fill="#01b8f1"/>
<rect x="782.1" y="432.9" width="21.4" height="26.7" fill="#01b8f1"/>
<rect x="809.4" y="435.5" width="21.4" height="24.1" fill="#01b8f1"/>
</g>
<text x="512.12" y="474.70" font-size="11" fill="#6a6a6a" stroke="#6a6a6a" stroke-width="0.2" textLength="15.96" lengthAdjust="spacingAndGlyphs">Jan</text>
<text x="538.84" y="474.70" font-size="11" fill="#6a6a6a" stroke="#6a6a6a" stroke-width="0.2" textLength="17.06" lengthAdjust="spacingAndGlyphs">Feb</text>
<text x="566.11" y="474.70" font-size="11" fill="#6a6a6a" stroke="#6a6a6a" stroke-width="0.2" textLength="17.05" lengthAdjust="spacingAndGlyphs">Mar</text>
<text x="594.21" y="474.70" font-size="11" fill="#6a6a6a" stroke="#6a6a6a" stroke-width="0.2" textLength="15.41" lengthAdjust="spacingAndGlyphs">Apr</text>
<text x="619.82" y="474.70" font-size="11" fill="#6a6a6a" stroke="#6a6a6a" stroke-width="0.2" textLength="18.70" lengthAdjust="spacingAndGlyphs">May</text>
<text x="648.47" y="474.70" font-size="11" fill="#6a6a6a" stroke="#6a6a6a" stroke-width="0.2" textLength="15.96" lengthAdjust="spacingAndGlyphs">Jun</text>
<text x="677.40" y="474.70" font-size="11" fill="#6a6a6a" stroke="#6a6a6a" stroke-width="0.2" textLength="12.66" lengthAdjust="spacingAndGlyphs">Jul</text>
<text x="702.18" y="474.70" font-size="11" fill="#6a6a6a" stroke="#6a6a6a" stroke-width="0.2" textLength="17.62" lengthAdjust="spacingAndGlyphs">Aug</text>
<text x="729.45" y="474.70" font-size="11" fill="#6a6a6a" stroke="#6a6a6a" stroke-width="0.2" textLength="17.62" lengthAdjust="spacingAndGlyphs">Sep</text>
<text x="757.83" y="474.70" font-size="11" fill="#6a6a6a" stroke="#6a6a6a" stroke-width="0.2" textLength="15.40" lengthAdjust="spacingAndGlyphs">Oct</text>
<text x="784.00" y="474.70" font-size="11" fill="#6a6a6a" stroke="#6a6a6a" stroke-width="0.2" textLength="17.61" lengthAdjust="spacingAndGlyphs">Nov</text>
<text x="811.27" y="474.70" font-size="11" fill="#6a6a6a" stroke="#6a6a6a" stroke-width="0.2" textLength="17.61" lengthAdjust="spacingAndGlyphs">Dec</text>
<text x="506.40" y="432.30" font-size="11" fill="#6e6e6e" stroke="#6e6e6e" stroke-width="0.2" textLength="27.41" lengthAdjust="spacingAndGlyphs">4.17%</text>
<text x="560.94" y="432.30" font-size="11" fill="#6e6e6e" stroke="#6e6e6e" stroke-width="0.2" textLength="27.41" lengthAdjust="spacingAndGlyphs">3.92%</text>
<text x="615.48" y="432.30" font-size="11" fill="#6e6e6e" stroke="#6e6e6e" stroke-width="0.2" textLength="27.41" lengthAdjust="spacingAndGlyphs">3.81%</text>
<text x="670.02" y="432.30" font-size="11" fill="#6e6e6e" stroke="#6e6e6e" stroke-width="0.2" textLength="27.41" lengthAdjust="spacingAndGlyphs">4.47%</text>
<text x="724.56" y="432.30" font-size="11" fill="#6e6e6e" stroke="#6e6e6e" stroke-width="0.2" textLength="27.41" lengthAdjust="spacingAndGlyphs">4.65%</text>
<text x="779.10" y="432.30" font-size="11" fill="#6e6e6e" stroke="#6e6e6e" stroke-width="0.2" textLength="27.41" lengthAdjust="spacingAndGlyphs">4.70%</text>
</g>
<g id="chart-invoice">
<text x="464.60" y="490.30" font-size="12" fill="#b3b3b3" stroke="#b3b3b3" stroke-width="0.2" textLength="106.41" lengthAdjust="spacingAndGlyphs">Total Invoice by Mon</text>
<rect x="500" y="519.8" width="351" height="1" fill="#e9e9e9"/>
<rect x="500" y="547.6" width="351" height="1" fill="#e9e9e9"/>
<text x="464.80" y="523.60" font-size="11" fill="#6a6a6a" stroke="#6a6a6a" stroke-width="0.2" textLength="25.19" lengthAdjust="spacingAndGlyphs">$20M</text>
<text x="470.50" y="550.70" font-size="11" fill="#6a6a6a" stroke="#6a6a6a" stroke-width="0.2" textLength="19.50" lengthAdjust="spacingAndGlyphs">$0M</text>
<g shape-rendering="auto">
<rect x="511.0" y="524.7" width="21.8" height="23.3" fill="#01b8f1"/>
<rect x="538.9" y="514.1" width="21.8" height="33.9" fill="#01b8f1"/>
<rect x="566.7" y="521.9" width="21.8" height="26.1" fill="#01b8f1"/>
<rect x="594.5" y="524.0" width="21.8" height="24.0" fill="#01b8f1"/>
<rect x="622.4" y="522.6" width="21.8" height="25.4" fill="#01b8f1"/>
<rect x="650.2" y="525.6" width="21.8" height="22.4" fill="#01b8f1"/>
<rect x="678.1" y="522.0" width="21.8" height="26.0" fill="#01b8f1"/>
<rect x="706.0" y="521.8" width="21.8" height="26.2" fill="#01b8f1"/>
<rect x="733.8" y="526.0" width="21.8" height="22.0" fill="#01b8f1"/>
<rect x="761.6" y="523.8" width="21.8" height="24.2" fill="#01b8f1"/>
<rect x="789.5" y="524.6" width="21.8" height="23.4" fill="#01b8f1"/>
<rect x="817.4" y="519.0" width="21.8" height="29.0" fill="#01b8f1"/>
</g>
<text x="513.92" y="562.80" font-size="11" fill="#6a6a6a" stroke="#6a6a6a" stroke-width="0.2" textLength="15.96" lengthAdjust="spacingAndGlyphs">Jan</text>
<text x="509.60" y="517.00" font-size="10.5" fill="#6e6e6e" stroke="#6e6e6e" stroke-width="0.2" textLength="24.59" lengthAdjust="spacingAndGlyphs">$17M</text>
<text x="541.22" y="562.80" font-size="11" fill="#6a6a6a" stroke="#6a6a6a" stroke-width="0.2" textLength="17.06" lengthAdjust="spacingAndGlyphs">Feb</text>
<text x="537.45" y="513.50" font-size="10.5" fill="#6e6e6e" stroke="#6e6e6e" stroke-width="0.2" textLength="24.59" lengthAdjust="spacingAndGlyphs">$24M</text>
<text x="569.07" y="562.80" font-size="11" fill="#6a6a6a" stroke="#6a6a6a" stroke-width="0.2" textLength="17.05" lengthAdjust="spacingAndGlyphs">Mar</text>
<text x="565.30" y="514.20" font-size="10.5" fill="#6e6e6e" stroke="#6e6e6e" stroke-width="0.2" textLength="24.59" lengthAdjust="spacingAndGlyphs">$19M</text>
<text x="597.75" y="562.80" font-size="11" fill="#6a6a6a" stroke="#6a6a6a" stroke-width="0.2" textLength="15.41" lengthAdjust="spacingAndGlyphs">Apr</text>
<text x="593.15" y="515.80" font-size="10.5" fill="#6e6e6e" stroke="#6e6e6e" stroke-width="0.2" textLength="24.59" lengthAdjust="spacingAndGlyphs">$17M</text>
<text x="623.94" y="562.80" font-size="11" fill="#6a6a6a" stroke="#6a6a6a" stroke-width="0.2" textLength="18.70" lengthAdjust="spacingAndGlyphs">May</text>
<text x="621.00" y="514.90" font-size="10.5" fill="#6e6e6e" stroke="#6e6e6e" stroke-width="0.2" textLength="24.59" lengthAdjust="spacingAndGlyphs">$18M</text>
<text x="653.17" y="562.80" font-size="11" fill="#6a6a6a" stroke="#6a6a6a" stroke-width="0.2" textLength="15.96" lengthAdjust="spacingAndGlyphs">Jun</text>
<text x="648.85" y="518.00" font-size="10.5" fill="#6e6e6e" stroke="#6e6e6e" stroke-width="0.2" textLength="24.59" lengthAdjust="spacingAndGlyphs">$16M</text>
<text x="682.68" y="562.80" font-size="11" fill="#6a6a6a" stroke="#6a6a6a" stroke-width="0.2" textLength="12.66" lengthAdjust="spacingAndGlyphs">Jul</text>
<text x="676.70" y="514.40" font-size="10.5" fill="#6e6e6e" stroke="#6e6e6e" stroke-width="0.2" textLength="24.59" lengthAdjust="spacingAndGlyphs">$19M</text>
<text x="708.04" y="562.80" font-size="11" fill="#6a6a6a" stroke="#6a6a6a" stroke-width="0.2" textLength="17.62" lengthAdjust="spacingAndGlyphs">Aug</text>
<text x="704.55" y="514.20" font-size="10.5" fill="#6e6e6e" stroke="#6e6e6e" stroke-width="0.2" textLength="24.59" lengthAdjust="spacingAndGlyphs">$19M</text>
<text x="735.89" y="562.80" font-size="11" fill="#6a6a6a" stroke="#6a6a6a" stroke-width="0.2" textLength="17.62" lengthAdjust="spacingAndGlyphs">Sep</text>
<text x="732.40" y="517.70" font-size="10.5" fill="#6e6e6e" stroke="#6e6e6e" stroke-width="0.2" textLength="24.59" lengthAdjust="spacingAndGlyphs">$16M</text>
<text x="764.85" y="562.80" font-size="11" fill="#6a6a6a" stroke="#6a6a6a" stroke-width="0.2" textLength="15.40" lengthAdjust="spacingAndGlyphs">Oct</text>
<text x="760.25" y="516.40" font-size="10.5" fill="#6e6e6e" stroke="#6e6e6e" stroke-width="0.2" textLength="24.59" lengthAdjust="spacingAndGlyphs">$18M</text>
<text x="791.60" y="562.80" font-size="11" fill="#6a6a6a" stroke="#6a6a6a" stroke-width="0.2" textLength="17.61" lengthAdjust="spacingAndGlyphs">Nov</text>
<text x="788.10" y="517.20" font-size="10.5" fill="#6e6e6e" stroke="#6e6e6e" stroke-width="0.2" textLength="24.59" lengthAdjust="spacingAndGlyphs">$17M</text>
<text x="819.45" y="562.80" font-size="11" fill="#6a6a6a" stroke="#6a6a6a" stroke-width="0.2" textLength="17.61" lengthAdjust="spacingAndGlyphs">Dec</text>
<text x="815.95" y="513.10" font-size="10.5" fill="#6e6e6e" stroke="#6e6e6e" stroke-width="0.2" textLength="24.59" lengthAdjust="spacingAndGlyphs">$21M</text>
</g>
</svg>
</div>
<div id="pages">
<div style="left:35px;top:0;width:131.6px;height:31px;background:#fff"></div>
<div style="left:166.6px;top:0;width:1px;height:31px;background:#d0d0d0"></div>
<div style="left:293px;top:0;width:37.8px;height:31px;background:#f2c811"></div>
<svg width="40" height="31" viewBox="40 599 40 31" style="left:0;top:0"><path d="M50 612.5v7l-4.4-3.5z" fill="#c9c9c9"/><path d="M67.2 612.5v7l4.4-3.5z" fill="#c9c9c9"/></svg>
<svg width="38" height="31" viewBox="333 599 38 31" style="left:293px;top:0"><path d="M352.5 612.4v10.6M347.2 617.7h10.6" stroke="#6b6458" stroke-width="2.4" fill="none"/></svg>
<span class="t" style="left:56.00px;top:9.5px;font-size:13px;line-height:16px;color:#333;transform:scaleX(0.9049)">Discount Analysis</span>
<span class="t" style="left:188.70px;top:9.5px;font-size:13px;line-height:16px;color:#333;transform:scaleX(0.8992)">Spend Overview</span>
</div>
</body>
</html>
